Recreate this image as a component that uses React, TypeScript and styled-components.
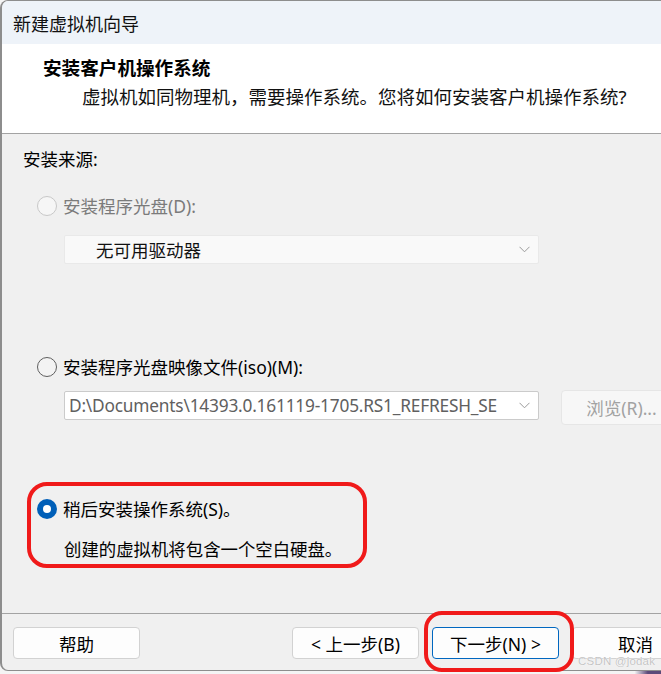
import React from "react";
import styled, { createGlobalStyle, css } from "styled-components";

const Global = createGlobalStyle`
  html, body {
    margin: 0;
    padding: 0;
    width: 661px;
    height: 674px;
    overflow: hidden;
    background: linear-gradient(to right, #f4f4f4 0%, #f4f4f4 96%, #5c4a7a 98%);
  }
  #root {
    width: 661px;
    height: 674px;
  }
  * { box-sizing: border-box; }
`;

const FONT = `"Noto Sans", "Noto Sans CJK SC", sans-serif`;

const Page = styled.div`
  position: relative;
  width: 661px;
  height: 674px;
  overflow: hidden;
  font-family: ${FONT};
  color: #000;
`;

const Window = styled.div`
  width: 700px;
  height: 671px;
  border: 1px solid #8d8d8d;
  border-left: 2px solid #8d8d8d;
  border-right: none;
  border-radius: 8px 0 0 8px;
  overflow: hidden;
  display: flex;
  flex-direction: column;
  background: #f0f0f0;
`;

const TitleBar = styled.div`
  height: 43px;
  flex: none;
  background: #eef3f9;
  padding-left: 11px;
  display: flex;
  align-items: center;
  font-size: 18px;
  color: #111;
`;

const Header = styled.div`
  height: 90px;
  flex: none;
  background: #fff;
  border-bottom: 1px solid #a3a3a3;
  padding-top: 12px;
`;

const HeaderTitle = styled.div`
  padding-left: 41px;
  font-size: 18.6px;
  line-height: 24px;
  font-weight: 700;
`;

const HeaderSub = styled.div`
  padding-left: 80px;
  margin-top: 5px;
  font-size: 18.5px;
  line-height: 24px;
  color: #111;
`;

const Body = styled.div`
  flex: 1;
  display: flex;
  flex-direction: column;
  padding-left: 21px;
`;

const SourceLabel = styled.div`
  margin-top: 13px;
  font-size: 17.5px;
  line-height: 24px;
`;

const RadioRow = styled.div<{ $mt: number }>`
  margin-top: ${(p) => p.$mt}px;
  margin-left: 14px;
  display: flex;
  align-items: center;
  gap: 6px;
  height: 24px;
`;

const RadioCircle = styled.span<{ $state: "disabled" | "off" | "on" }>`
  position: relative;
  width: 20px;
  height: 20px;
  flex: none;
  border-radius: 50%;
  ${(p) =>
    p.$state === "disabled"
      ? css`
          border: 1px solid #c8c8c8;
          background: #f6f6f6;
        `
      : p.$state === "off"
      ? css`
          border: 1px solid #5f5f5f;
          background: #f3f3f3;
        `
      : css`
          background: #005fb8;
          &::after {
            content: "";
            position: absolute;
            left: 6px;
            top: 6px;
            width: 8px;
            height: 8px;
            border-radius: 50%;
            background: #fff;
          }
        `}
`;

const RadioLabel = styled.span<{ $disabled?: boolean }>`
  font-size: 17.5px;
  line-height: 24px;
  color: ${(p) => (p.$disabled ? "#7b7b7b" : "#000")};
  white-space: nowrap;
`;

const Select = styled.div<{ $variant: "empty" | "path" }>`
  width: 475px;
  height: 29px;
  display: flex;
  align-items: center;
  justify-content: space-between;
  border-radius: 2px;
  ${(p) =>
    p.$variant === "empty"
      ? css`
          background: #f9f9f9;
          border: 1px solid #e9e9e9;
          padding: 0 8px 0 31px;
        `
      : css`
          background: #fff;
          border: 1px solid #cbcbcb;
          padding: 0 8px 0 4px;
        `}
`;

const SelectText = styled.span<{ $variant: "empty" | "path" }>`
  font-size: 17.5px;
  line-height: 24px;
  white-space: nowrap;
  ${(p) =>
    p.$variant === "empty"
      ? css`
          color: #111;
        `
      : css`
          color: #606060;
          font-size: 17.3px;
          letter-spacing: -0.2px;
        `}
`;

const SelectWrap = styled.div<{ $mt: number }>`
  margin-top: ${(p) => p.$mt}px;
  margin-left: 41px;
`;

const PathRow = styled.div`
  margin-top: 11px;
  margin-left: 41px;
  display: flex;
  align-items: flex-start;
  gap: 22px;
`;

const PathSelectHolder = styled.div`
  margin-top: 1px;
`;

const BrowseButton = styled.div`
  width: 127px;
  height: 35px;
  flex: none;
  background: #f7f7f7;
  border: 1px solid #e6e6e6;
  border-radius: 4px;
  display: flex;
  align-items: center;
  justify-content: center;
  padding-right: 6px;
  font-size: 17.5px;
  color: #a2a2a2;
  white-space: nowrap;
`;

const Description = styled.div`
  margin-top: 16px;
  margin-left: 41px;
  font-size: 17.4px;
  line-height: 24px;
`;

const Footer = styled.div`
  height: 57px;
  flex: none;
  border-top: 1px solid #a3a3a3;
  padding: 13px 0 0 11px;
  display: flex;
  align-items: flex-start;
`;

const ButtonGroup = styled.div`
  margin-left: 152px;
  display: flex;
  gap: 13px;
`;

const Button = styled.div<{ $primary?: boolean }>`
  width: 127px;
  height: 32px;
  flex: none;
  background: #fdfdfd;
  border: 1px solid ${(p) => (p.$primary ? "#0067c0" : "#d2d2d2")};
  border-radius: 4px;
  display: flex;
  align-items: center;
  justify-content: center;
  font-size: 17.5px;
  color: #000;
  white-space: pre;
`;

const Annotation = styled.div<{ $l: number; $t: number; $w: number; $h: number; $r: number }>`
  position: absolute;
  left: ${(p) => p.$l}px;
  top: ${(p) => p.$t}px;
  width: ${(p) => p.$w}px;
  height: ${(p) => p.$h}px;
  border: 4px solid #f01a1a;
  border-radius: ${(p) => p.$r}px;
  pointer-events: none;
`;

const Watermark = styled.span`
  position: absolute;
  left: 578px;
  top: 654px;
  font-family: "Liberation Sans", sans-serif;
  font-size: 11.5px;
  line-height: 15px;
  color: #c4c4c4;
  text-shadow: 0 0 1px #fff, 0 0 1px #fff;
  letter-spacing: 0.2px;
`;

const Chevron = () => (
  <svg width="11" height="7" viewBox="0 0 11 7" fill="none">
    <polyline points="0.5,0.8 5.5,5.8 10.5,0.8" stroke="#9a9a9a" strokeWidth="1" />
  </svg>
);

export default function App() {
  return (
    <>
      <Global />
      <Page>
        <Window>
          <TitleBar>新建虚拟机向导</TitleBar>
          <Header>
            <HeaderTitle>安装客户机操作系统</HeaderTitle>
            <HeaderSub>虚拟机如同物理机，需要操作系统。您将如何安装客户机操作系统?</HeaderSub>
          </Header>
          <Body>
            <SourceLabel>安装来源:</SourceLabel>

            <RadioRow $mt={23}>
              <RadioCircle $state="disabled" />
              <RadioLabel $disabled>安装程序光盘(D):</RadioLabel>
            </RadioRow>
            <SelectWrap $mt={17}>
              <Select $variant="empty">
                <SelectText $variant="empty">无可用驱动器</SelectText>
                <Chevron />
              </Select>
            </SelectWrap>

            <RadioRow $mt={91}>
              <RadioCircle $state="off" />
              <RadioLabel>安装程序光盘映像文件(iso)(M):</RadioLabel>
            </RadioRow>
            <PathRow>
              <PathSelectHolder>
                <Select $variant="path">
                  <SelectText $variant="path">D:\Documents\14393.0.161119-1705.RS1_REFRESH_SE</SelectText>
                  <Chevron />
                </Select>
              </PathSelectHolder>
              <BrowseButton>浏览(R)...</BrowseButton>
            </PathRow>

            <RadioRow $mt={72}>
              <RadioCircle $state="on" />
              <RadioLabel>稍后安装操作系统(S)。</RadioLabel>
            </RadioRow>
            <Description>创建的虚拟机将包含一个空白硬盘。</Description>
          </Body>
          <Footer>
            <Button>帮助</Button>
            <ButtonGroup>
              <Button>{"< 上一步(B)"}</Button>
              <Button $primary>{"下一步(N) >"}</Button>
              <Button>取消</Button>
            </ButtonGroup>
          </Footer>
        </Window>
        <Annotation $l={27} $t={482} $w={340} $h={86} $r={20} />
        <Annotation $l={424} $t={611} $w={150} $h={61} $r={18} />
        <Watermark>CSDN @jodak</Watermark>
      </Page>
    </>
  );
}
